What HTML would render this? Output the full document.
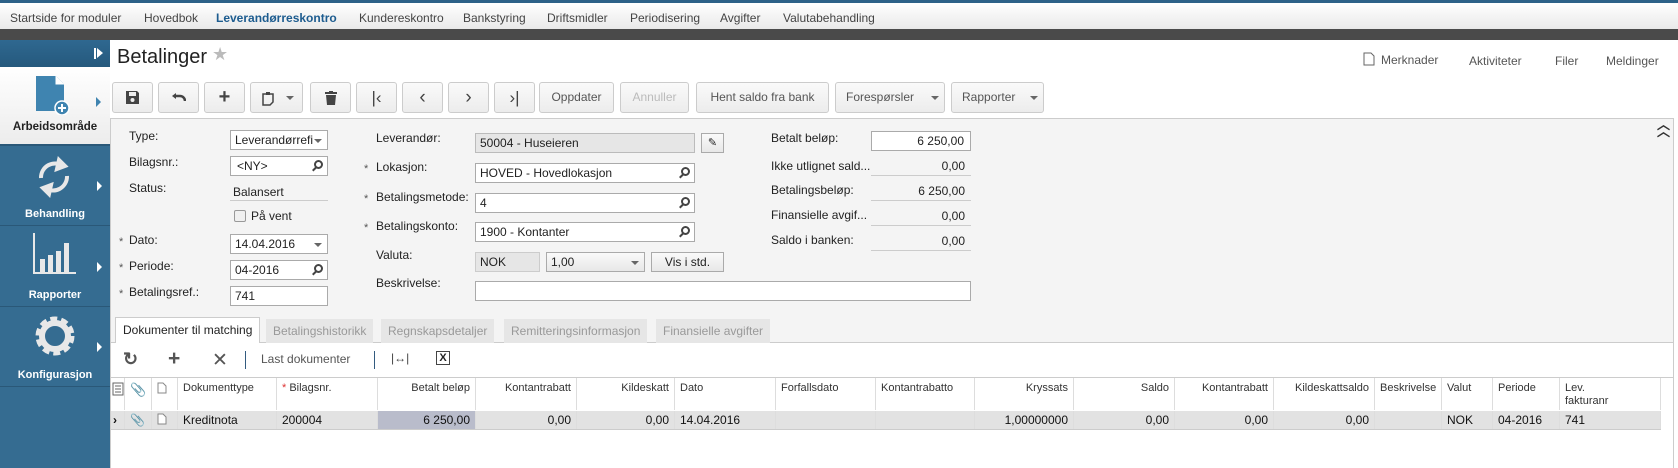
<!DOCTYPE html>
<html><head><meta charset="utf-8"><style>
*{box-sizing:border-box;margin:0;padding:0}
body{width:1678px;height:468px;overflow:hidden;background:#fff;font-family:"Liberation Sans",sans-serif;font-size:12px;color:#222;position:relative}
.a{position:absolute}
.nav{left:0;top:0;width:1678px;height:29px;background:linear-gradient(#fff,#e9e9e9);border-top:3px solid #2d6188}
.nav span{position:absolute;top:8px;font-size:12px;color:#444}
.band{left:0;top:29px;width:1678px;height:11px;background:#4a4a4a}
.sb{left:0;top:40px;width:110px;height:428px;background:#356c91}
.sec{left:0;width:110px;height:80px;border-bottom:1px solid #2a5878;color:#fff;text-align:center;font-weight:bold;font-size:11px}
.tri{position:absolute;right:8px;width:0;height:0;border-left:5px solid #fff;border-top:5px solid transparent;border-bottom:5px solid transparent}
.btn{position:absolute;top:82px;height:31px;border:1px solid #ccc;border-radius:3px;background:linear-gradient(#fafafa,#ececec);color:#555;font-size:12px;text-align:center;line-height:29px}
.lbl{position:absolute;font-size:12px;color:#222}
.inp{position:absolute;height:20px;border:1px solid #aaa;background:#fff;font-size:12px;padding-left:4px;line-height:18px}
.ro{position:absolute;height:20px;border-bottom:1px solid #ccc;font-size:12px;text-align:right;padding-right:6px;line-height:20px}
.st{position:absolute;color:#555;font-size:11px}
.mag{position:absolute;right:4px;top:3px;width:9px;height:9px;border:2px solid #444;border-radius:50%}
.mag:after{content:"";position:absolute;left:-4px;top:6px;width:5px;height:2px;background:#444;transform:rotate(-45deg)}
.dd{position:absolute;right:5px;top:8px;border-top:4px solid #666;border-left:4px solid transparent;border-right:4px solid transparent}
.tab{position:absolute;top:319px;height:24px;background:#e6e6e6;color:#999;font-size:12px;line-height:24px;padding:0 7px}
.th{position:absolute;top:378px;height:32px;border-right:1px solid #ddd;font-size:11px;color:#333;padding:4px 5px}
.td{position:absolute;top:411px;height:18px;border-right:1px solid #ddd;font-size:12px;color:#111;padding:2px 5px;line-height:15px}
.r{text-align:right}
</style></head><body>
<div class="a nav">
<span style="left:10px">Startside for moduler</span><span style="left:144px">Hovedbok</span><span style="left:216px;color:#1d5c8f;font-weight:bold">Leverandørreskontro</span><span style="left:359px">Kundereskontro</span><span style="left:463px">Bankstyring</span><span style="left:547px">Driftsmidler</span><span style="left:630px">Periodisering</span><span style="left:720px">Avgifter</span><span style="left:783px">Valutabehandling</span>
</div>
<div class="a band"></div>
<div class="a sb">
 <div class="a" style="left:0;top:0;width:110px;height:27px;background:linear-gradient(#2f6890,#25597d)"><div class="a" style="left:94px;top:8px;width:2px;height:11px;background:#fff"></div><div class="a" style="left:97px;top:8px;border-left:6px solid #fff;border-top:5.5px solid transparent;border-bottom:5.5px solid transparent"></div></div>
 <div class="a" style="left:0;top:27px;width:110px;height:79px;background:linear-gradient(#fff,#ececec);border-bottom:2px solid #2a5878">
  <svg class="a" style="left:34px;top:8px" width="40" height="40"><path d="M2 1h20l8 8v27H2z" fill="#3f84b0"/><path d="M22 1v8h8" fill="#fff" stroke="#fff"/><circle cx="28" cy="33" r="7" fill="#3f84b0" stroke="#fff" stroke-width="1.5"/><path d="M28 29v8M24 33h8" stroke="#fff" stroke-width="2"/></svg>
  <div class="a" style="left:96px;top:30px;border-left:5px solid #3f84b0;border-top:5px solid transparent;border-bottom:5px solid transparent"></div>
  <div class="a" style="left:0;width:110px;top:54px;text-align:center;font-weight:bold;font-size:11.5px;color:#222">Arbeidsområde</div>
 </div>
 <div class="a sec" style="top:106px"><svg class="a" style="left:33px;top:10px" width="42" height="42" fill="none" stroke="#e8e8e8" stroke-width="4"><path d="M8 22a14 14 0 0 1 22-12"/><path d="M34 20a14 14 0 0 1-22 12"/><path d="M26 4l6 6-8 3z" fill="#e8e8e8"/><path d="M16 38l-6-6 8-3z" fill="#e8e8e8"/></svg><div class="tri" style="top:35px"></div><div class="a" style="left:0;width:110px;top:62px">Behandling</div></div>
 <div class="a sec" style="top:187px"><svg class="a" style="left:30px;top:4px" width="50" height="46"><path d="M4 2v40h42" stroke="#e8e8e8" stroke-width="2" fill="none"/><rect x="10" y="28" width="5" height="13" fill="#e8e8e8"/><rect x="18" y="24" width="5" height="17" fill="#e8e8e8"/><rect x="26" y="20" width="5" height="21" fill="#e8e8e8"/><rect x="34" y="12" width="5" height="29" fill="#e8e8e8"/></svg><div class="tri" style="top:35px"></div><div class="a" style="left:0;width:110px;top:62px">Rapporter</div></div>
 <div class="a sec" style="top:267px"><svg class="a" style="left:32px;top:6px" width="46" height="46"><circle cx="23" cy="23" r="15" fill="none" stroke="#e8e8e8" stroke-width="9" stroke-dasharray="6 3.5"/><circle cx="23" cy="23" r="13" fill="none" stroke="#e8e8e8" stroke-width="6"/></svg><div class="tri" style="top:35px"></div><div class="a" style="left:0;width:110px;top:62px">Konfigurasjon</div></div>
</div>
<div class="a" style="left:117px;top:46px;font-size:20px;color:#222">Betalinger</div>
<div class="a" style="left:212px;top:44px;font-size:18px;color:#bbb">★</div>
<svg class="a" style="left:1363px;top:52px" width="12" height="14"><path d="M1 1h7l3 3v9H1z" fill="none" stroke="#666"/></svg>
<div class="a" style="left:1381px;top:53px;color:#555">Merknader</div>
<div class="a" style="left:1469px;top:54px;color:#555">Aktiviteter</div>
<div class="a" style="left:1555px;top:54px;color:#555">Filer</div>
<div class="a" style="left:1606px;top:54px;color:#555">Meldinger</div>
<div class="btn" style="left:112px;width:41px"><svg style="margin-top:8px" width="13" height="13"><path d="M0 0h11l2 2v11H0z" fill="#444"/><rect x="3" y="1" width="7" height="4" fill="#eee"/><circle cx="6.5" cy="9" r="2" fill="#eee"/></svg></div>
<div class="btn" style="left:158px;width:41px"><svg style="margin-top:9px" width="14" height="10"><path d="M4 1L0 4l4 3" fill="#444"/><path d="M2 4h6a5 5 0 0 1 5 5" stroke="#444" stroke-width="2.5" fill="none"/></svg></div>
<div class="btn" style="left:204px;width:41px;font-size:20px;font-weight:bold;color:#444">+</div>
<div class="btn" style="left:250px;width:53px"><svg class="a" style="left:11px;top:8px" width="12" height="15"><path d="M1 3h10v8l-3 3H1z" fill="none" stroke="#444" stroke-width="1.5"/><rect x="4" y="1" width="4" height="3" fill="#444"/></svg><div class="dd" style="top:13px;right:8px"></div></div>
<div class="btn" style="left:310px;width:41px"><svg style="margin-top:8px" width="12" height="14"><rect x="0" y="1" width="12" height="2" fill="#444"/><rect x="4" y="0" width="4" height="2" fill="#444"/><path d="M1 4h10l-1 10H2z" fill="#444"/></svg></div>
<div class="btn" style="left:356px;width:41px;font-size:17px;color:#444">|‹</div>
<div class="btn" style="left:402px;width:41px;font-size:19px;color:#444">‹</div>
<div class="btn" style="left:448px;width:41px;font-size:19px;color:#444">›</div>
<div class="btn" style="left:494px;width:41px;font-size:17px;color:#444">›|</div>
<div class="btn" style="left:539px;width:75px">Oppdater</div>
<div class="btn" style="left:620px;width:69px;color:#bbb">Annuller</div>
<div class="btn" style="left:696px;width:133px">Hent saldo fra bank</div>
<div class="btn" style="left:835px;width:110px;text-align:left;padding-left:10px">Forespørsler<div class="dd" style="top:13px"></div></div>
<div class="btn" style="left:951px;width:93px;text-align:left;padding-left:10px">Rapporter<div class="dd" style="top:13px"></div></div>
<div class="a" style="left:110px;top:118px;width:1564px;height:1px;background:#ccc"></div>
<div class="a" style="left:110px;top:119px;width:1564px;height:224px;background:#f4f4f4;border-right:1px solid #ccc;border-left:1px solid #ccc"></div>
<div class="a" style="left:1657px;top:121px;font-size:13px;font-weight:bold;color:#333;line-height:7px">︿<br>︿</div>
<!-- col 1 -->
<div class="lbl" style="left:129px;top:129px">Type:</div>
<div class="inp" style="left:230px;top:130px;width:98px">Leverandørrefi<div class="dd"></div></div>
<div class="lbl" style="left:129px;top:155px">Bilagsnr.:</div>
<div class="inp" style="left:230px;top:156px;width:98px;padding-left:6px">&lt;NY&gt;<div class="mag"></div></div>
<div class="lbl" style="left:129px;top:181px">Status:</div>
<div class="a" style="left:230px;top:182px;width:98px;height:19px;border-bottom:1px solid #ccc;padding-left:3px;line-height:20px">Balansert</div>
<div class="a" style="left:234px;top:210px;width:12px;height:12px;border:1px solid #999;border-radius:2px;background:#f0f0f0"></div>
<div class="lbl" style="left:251px;top:209px">På vent</div>
<div class="st" style="left:119px;top:236px">*</div><div class="lbl" style="left:129px;top:233px">Dato:</div>
<div class="inp" style="left:230px;top:234px;width:98px">14.04.2016<div class="dd"></div></div>
<div class="st" style="left:119px;top:262px">*</div><div class="lbl" style="left:129px;top:259px">Periode:</div>
<div class="inp" style="left:230px;top:260px;width:98px">04-2016<div class="mag"></div></div>
<div class="st" style="left:119px;top:288px">*</div><div class="lbl" style="left:129px;top:285px">Betalingsref.:</div>
<div class="inp" style="left:230px;top:286px;width:98px">741</div>
<!-- col 2 -->
<div class="lbl" style="left:376px;top:131px">Leverandør:</div>
<div class="inp" style="left:475px;top:133px;width:220px;background:#e6e6e6;border-color:#bbb">50004 - Huseieren</div>
<div class="inp" style="left:701px;top:133px;width:23px;background:linear-gradient(#fafafa,#e8e8e8);font-size:11px;text-align:center;padding:0">✎</div>
<div class="st" style="left:364px;top:163px">*</div><div class="lbl" style="left:376px;top:160px">Lokasjon:</div>
<div class="inp" style="left:475px;top:163px;width:220px">HOVED - Hovedlokasjon<div class="mag"></div></div>
<div class="st" style="left:364px;top:193px">*</div><div class="lbl" style="left:376px;top:190px">Betalingsmetode:</div>
<div class="inp" style="left:475px;top:193px;width:220px">4<div class="mag"></div></div>
<div class="st" style="left:364px;top:222px">*</div><div class="lbl" style="left:376px;top:219px">Betalingskonto:</div>
<div class="inp" style="left:475px;top:222px;width:220px">1900 - Kontanter<div class="mag"></div></div>
<div class="lbl" style="left:376px;top:248px">Valuta:</div>
<div class="inp" style="left:475px;top:252px;width:65px;background:#e6e6e6;border-color:#ccc">NOK</div>
<div class="inp" style="left:546px;top:252px;width:99px;background:linear-gradient(#fafafa,#e8e8e8)">1,00<div class="dd"></div></div>
<div class="inp" style="left:651px;top:252px;width:73px;background:linear-gradient(#fafafa,#e8e8e8);text-align:center;padding:0">Vis i std.</div>
<div class="lbl" style="left:376px;top:276px">Beskrivelse:</div>
<div class="inp" style="left:475px;top:281px;width:496px"></div>
<!-- col 3 -->
<div class="lbl" style="left:771px;top:131px">Betalt beløp:</div>
<div class="inp" style="left:871px;top:131px;width:100px;text-align:right;padding-right:6px">6 250,00</div>
<div class="lbl" style="left:771px;top:159px">Ikke utlignet sald...</div>
<div class="ro" style="left:871px;top:156px;width:100px">0,00</div>
<div class="lbl" style="left:771px;top:183px">Betalingsbeløp:</div>
<div class="ro" style="left:871px;top:181px;width:100px">6 250,00</div>
<div class="lbl" style="left:771px;top:208px">Finansielle avgif...</div>
<div class="ro" style="left:871px;top:206px;width:100px">0,00</div>
<div class="lbl" style="left:771px;top:233px">Saldo i banken:</div>
<div class="ro" style="left:871px;top:231px;width:100px">0,00</div>
<!-- tabs -->
<div class="a" style="left:110px;top:342px;width:1564px;height:1px;background:#ccc"></div>
<div class="tab" style="left:115px;top:317px;height:26px;background:#fff;border:1px solid #ccc;border-bottom:none;color:#222">Dokumenter til matching</div>
<div class="tab" style="left:266px">Betalingshistorikk</div>
<div class="tab" style="left:381px">Regnskapsdetaljer</div>
<div class="tab" style="left:504px">Remitteringsinformasjon</div>
<div class="tab" style="left:656px">Finansielle avgifter</div>
<!-- grid toolbar -->
<div class="a" style="left:110px;top:343px;width:1564px;height:125px;border-left:1px solid #ccc;border-right:1px solid #ccc"></div>
<div class="a" style="left:123px;top:349px;font-size:18px;font-weight:bold;color:#555">↻</div>
<div class="a" style="left:168px;top:347px;font-size:21px;font-weight:bold;color:#555">+</div>
<div class="a" style="left:212px;top:349px;font-size:19px;color:#555">✕</div>
<div class="a" style="left:245px;top:351px;width:1px;height:18px;background:#335b7f"></div>
<div class="a" style="left:261px;top:352px;color:#555;font-size:12px">Last dokumenter</div>
<div class="a" style="left:374px;top:351px;width:1px;height:18px;background:#335b7f"></div>
<div class="a" style="left:391px;top:351px;color:#444;font-size:12px">|↔|</div>
<div class="a" style="left:436px;top:351px;width:14px;height:14px;border:1px solid #444;font-size:11px;font-weight:bold;line-height:12px;text-align:center">X</div>
<!-- grid -->
<div class="a" style="left:110px;top:377px;width:1564px;height:1px;background:#ccc"></div>
<div class="a" style="left:111px;top:378px;width:1550px;height:33px;background:#fff"></div>
<div class="a" style="left:111px;top:411px;width:1550px;height:19px;background:#e2e2e2;border-bottom:1px solid #ccc"></div>
<div class="th" style="left:111px;width:14px;padding:4px 1px"><svg width="12" height="14"><rect x="1" y="1" width="10" height="12" fill="none" stroke="#666"/><path d="M3 4h6M3 7h6M3 10h6" stroke="#666"/></svg></div>
<div class="th" style="left:125px;width:27px;color:#666;font-size:13px">&#x1F4CE;</div>
<div class="th" style="left:152px;width:26px"><svg width="10" height="12"><path d="M1 1h5l3 3v7H1z" fill="none" stroke="#888"/></svg></div>
<div class="th" style="left:178px;width:99px">Dokumenttype</div>
<div class="th" style="left:277px;width:101px"><span style="color:#d33">*</span> Bilagsnr.</div>
<div class="th r" style="left:378px;width:98px">Betalt beløp</div>
<div class="th r" style="left:476px;width:101px">Kontantrabatt</div>
<div class="th r" style="left:577px;width:98px">Kildeskatt</div>
<div class="th" style="left:675px;width:101px">Dato</div>
<div class="th" style="left:776px;width:100px">Forfallsdato</div>
<div class="th" style="left:876px;width:99px;overflow:hidden;white-space:nowrap">Kontantrabatto</div>
<div class="th r" style="left:975px;width:99px">Kryssats</div>
<div class="th r" style="left:1074px;width:101px">Saldo</div>
<div class="th r" style="left:1175px;width:99px">Kontantrabatt</div>
<div class="th r" style="left:1274px;width:101px;overflow:hidden;white-space:nowrap">Kildeskattsaldo</div>
<div class="th" style="left:1375px;width:67px;overflow:hidden;white-space:nowrap">Beskrivelse</div>
<div class="th" style="left:1442px;width:51px">Valut</div>
<div class="th" style="left:1493px;width:67px">Periode</div>
<div class="th" style="left:1560px;width:101px;line-height:13px">Lev.<br>fakturanr</div>
<div class="td" style="left:111px;width:14px;font-weight:bold;padding:2px 2px">›</div>
<div class="td" style="left:125px;width:27px;color:#666">&#x1F4CE;</div>
<div class="td" style="left:152px;width:26px"><svg width="10" height="12"><path d="M1 1h5l3 3v7H1z" fill="#fff" stroke="#888"/></svg></div>
<div class="td" style="left:178px;width:99px">Kreditnota</div>
<div class="td" style="left:277px;width:101px">200004</div>
<div class="td r" style="left:378px;width:98px;background:#b9bccb">6 250,00</div>
<div class="td r" style="left:476px;width:101px">0,00</div>
<div class="td r" style="left:577px;width:98px">0,00</div>
<div class="td" style="left:675px;width:101px">14.04.2016</div>
<div class="td" style="left:776px;width:100px"></div>
<div class="td" style="left:876px;width:99px"></div>
<div class="td r" style="left:975px;width:99px">1,00000000</div>
<div class="td r" style="left:1074px;width:101px">0,00</div>
<div class="td r" style="left:1175px;width:99px">0,00</div>
<div class="td r" style="left:1274px;width:101px">0,00</div>
<div class="td" style="left:1375px;width:67px"></div>
<div class="td" style="left:1442px;width:51px">NOK</div>
<div class="td" style="left:1493px;width:67px">04-2016</div>
<div class="td" style="left:1560px;width:101px">741</div>
</body></html>
